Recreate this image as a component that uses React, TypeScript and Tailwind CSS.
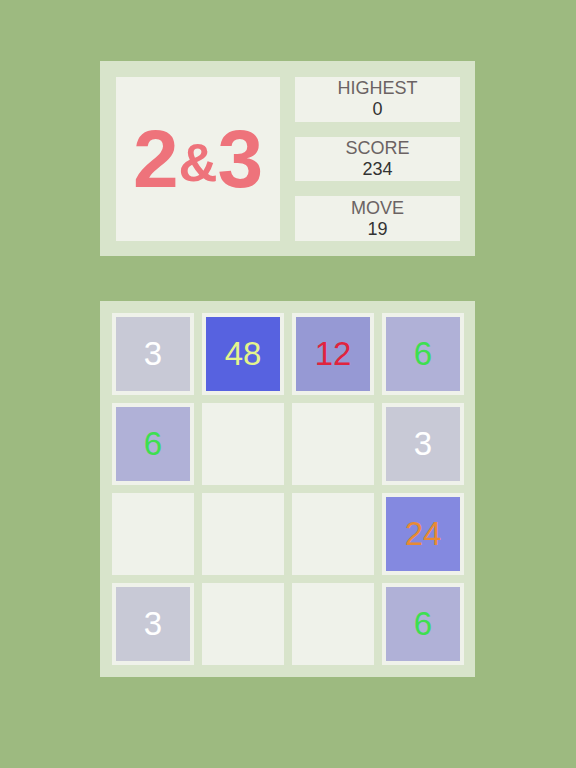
import React from "react";

type Tile = { v: number; bg: string; fg: string } | null;

const T3 = { v: 3, bg: "bg-[#c8c9d6]", fg: "text-white" };
const T6 = { v: 6, bg: "bg-[#b0b1d7]", fg: "text-[#3ddf4f]" };
const T12 = { v: 12, bg: "bg-[#9699d4]", fg: "text-[#e0243e]" };
const T24 = { v: 24, bg: "bg-[#8489e0]", fg: "text-[#e88a33]" };
const T48 = { v: 48, bg: "bg-[#5762e0]", fg: "text-[#e4f58c]" };

const board: Tile[] = [
  T3, T48, T12, T6,
  T6, null, null, T3,
  null, null, null, T24,
  T3, null, null, T6,
];

function Stat({ label, value }: { label: string; value: string }) {
  return (
    <div className="h-[45px] bg-[#f0f2ea] flex flex-col items-center justify-center leading-[21px] text-[18px]">
      <div className="text-[#6b6363]">{label}</div>
      <div className="text-[#333333]">{value}</div>
    </div>
  );
}

export default function App() {
  return (
    <div
      className="w-[576px] h-[768px] bg-[#9dba80] flex flex-col pl-[100px] pt-[61px]"
      style={{ fontFamily: '"Liberation Sans", Arial, sans-serif' }}
    >
      <div className="w-[375px] h-[195px] bg-[#d8e4cb] pl-[16px] pr-[15px] pt-[16px] pb-[15px] flex gap-[15px]">
        <div className="w-[164px] h-[164px] bg-[#f0f2ea] flex items-center justify-center text-[#ee737b] font-bold">
          <span className="text-[82px] leading-none">2</span>
          <span className="text-[54px] leading-none mt-[6px]">&amp;</span>
          <span className="text-[82px] leading-none">3</span>
        </div>
        <div className="flex-1 flex flex-col gap-[15px]">
          <Stat label="HIGHEST" value="0" />
          <Stat label="SCORE" value="234" />
          <Stat label="MOVE" value="19" />
        </div>
      </div>
      <div className="mt-[45px] w-[375px] h-[376px] bg-[#d8e4cb] pl-[12px] pr-[11px] pt-[12px] pb-[11px] grid grid-cols-[82px_82px_82px_82px] grid-rows-[82px_82px_82px_82px] gap-[8px]">
        {board.map((t, i) => (
          <div key={i} className="bg-[#eff2ea] p-[4px]">
            {t && (
              <div className={`w-full h-full flex items-center justify-center text-[33px] ${t.bg} ${t.fg}`}>
                {t.v}
              </div>
            )}
          </div>
        ))}
      </div>
    </div>
  );
}
